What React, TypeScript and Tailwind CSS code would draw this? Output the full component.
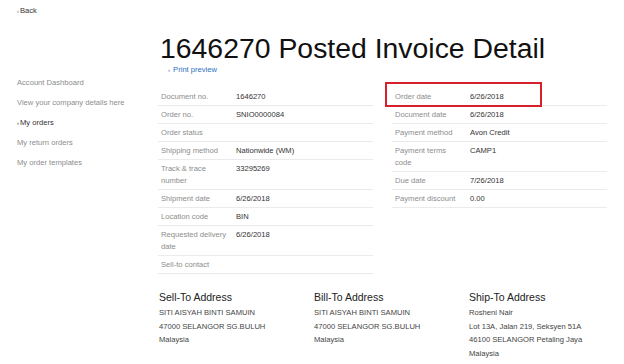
import React from 'react';

type Row = { label: string; value?: string; highlight?: boolean };

const leftRows: Row[] = [
  { label: 'Document no.', value: '1646270' },
  { label: 'Order no.', value: 'SNIO0000084' },
  { label: 'Order status' },
  { label: 'Shipping method', value: 'Nationwide (WM)' },
  { label: 'Track & trace number', value: '33295269' },
  { label: 'Shipment date', value: '6/26/2018' },
  { label: 'Location code', value: 'BIN' },
  { label: 'Requested delivery date', value: '6/26/2018' },
  { label: 'Sell-to contact' },
];

const rightRows: Row[] = [
  { label: 'Order date', value: '6/26/2018', highlight: true },
  { label: 'Document date', value: '6/26/2018' },
  { label: 'Payment method', value: 'Avon Credit' },
  { label: 'Payment terms code', value: 'CAMP1' },
  { label: 'Due date', value: '7/26/2018' },
  { label: 'Payment discount', value: '0.00' },
];

const addresses = [
  { title: 'Sell-To Address', lines: ['SITI AISYAH BINTI SAMUIN', '47000 SELANGOR SG.BULUH', 'Malaysia'] },
  { title: 'Bill-To Address', lines: ['SITI AISYAH BINTI SAMUIN', '47000 SELANGOR SG.BULUH', 'Malaysia'] },
  { title: 'Ship-To Address', lines: ['Rosheni Nair', 'Lot 13A, Jalan 219, Seksyen 51A', '46100 SELANGOR Petaling Jaya', 'Malaysia'] },
];

const menu = ['Account Dashboard', 'View your company details here', 'My orders', 'My return orders', 'My order templates'];

const DetailTable: React.FC<{ rows: Row[] }> = ({ rows }) => (
  <div className="w-[215px]">
    {rows.map(r => (
      <div key={r.label} className="relative flex border-b border-[#ebebeb] py-[2.5px] leading-[12px]">
        <div className="w-[78px] shrink-0 pl-[3px] pr-[8px] text-[#8c8c8c]">{r.label}</div>
        <div className="flex-1 text-[#333]">{r.value}</div>
        {r.highlight && (
          <div className="absolute left-[-7px] top-[-6px] h-[25px] w-[157px] border-2 border-[#d7202c]" />
        )}
      </div>
    ))}
  </div>
);

export default function App() {
  return (
    <div className="h-[364px] w-[624px] overflow-hidden bg-white text-[7.6px] font-['Liberation_Sans',Arial,sans-serif]">
      <div className="pl-[17px] pt-[5px] leading-[12px] text-[#333]">
        <span className="mr-[1px] text-[6px] text-[#777]">‹</span>Back
      </div>
      <div className="flex">
        <div className="w-[158px] shrink-0 pl-[17px] pt-[56px]">
          {menu.map(m => (
            <div key={m} className={`leading-[20px] ${m === 'My orders' ? 'text-[#333]' : 'text-[#8c8c8c]'}`}>
              {m === 'My orders' && <span className="mr-[1px] text-[6px]">›</span>}
              {m}
            </div>
          ))}
        </div>
        <div className="flex-1 pt-[17px]">
          <h1 className="pl-[2px] text-[28.4px] leading-[28.4px] text-[#111]">1646270 Posted Invoice Detail</h1>
          <div className="mt-[1.6px] pl-[10px] leading-[12px] text-[#2e6fc2]">
            <span className="mr-[1px] text-[6px]">›</span> Print preview
          </div>
          <div className="mt-[12px] flex gap-[19px]">
            <DetailTable rows={leftRows} />
            <DetailTable rows={rightRows} />
          </div>
          <div className="mt-[16px] flex pl-[1px]">
            {addresses.map(a => (
              <div key={a.title} className="w-[155px]">
                <div className="text-[10.5px] leading-[14px] text-[#222]">{a.title}</div>
                <div className="mt-[2px] text-[#444]">
                  {a.lines.map((l, i) => (
                    <div key={i} className="leading-[13.5px]">{l}</div>
                  ))}
                </div>
              </div>
            ))}
          </div>
        </div>
      </div>
    </div>
  );
}
